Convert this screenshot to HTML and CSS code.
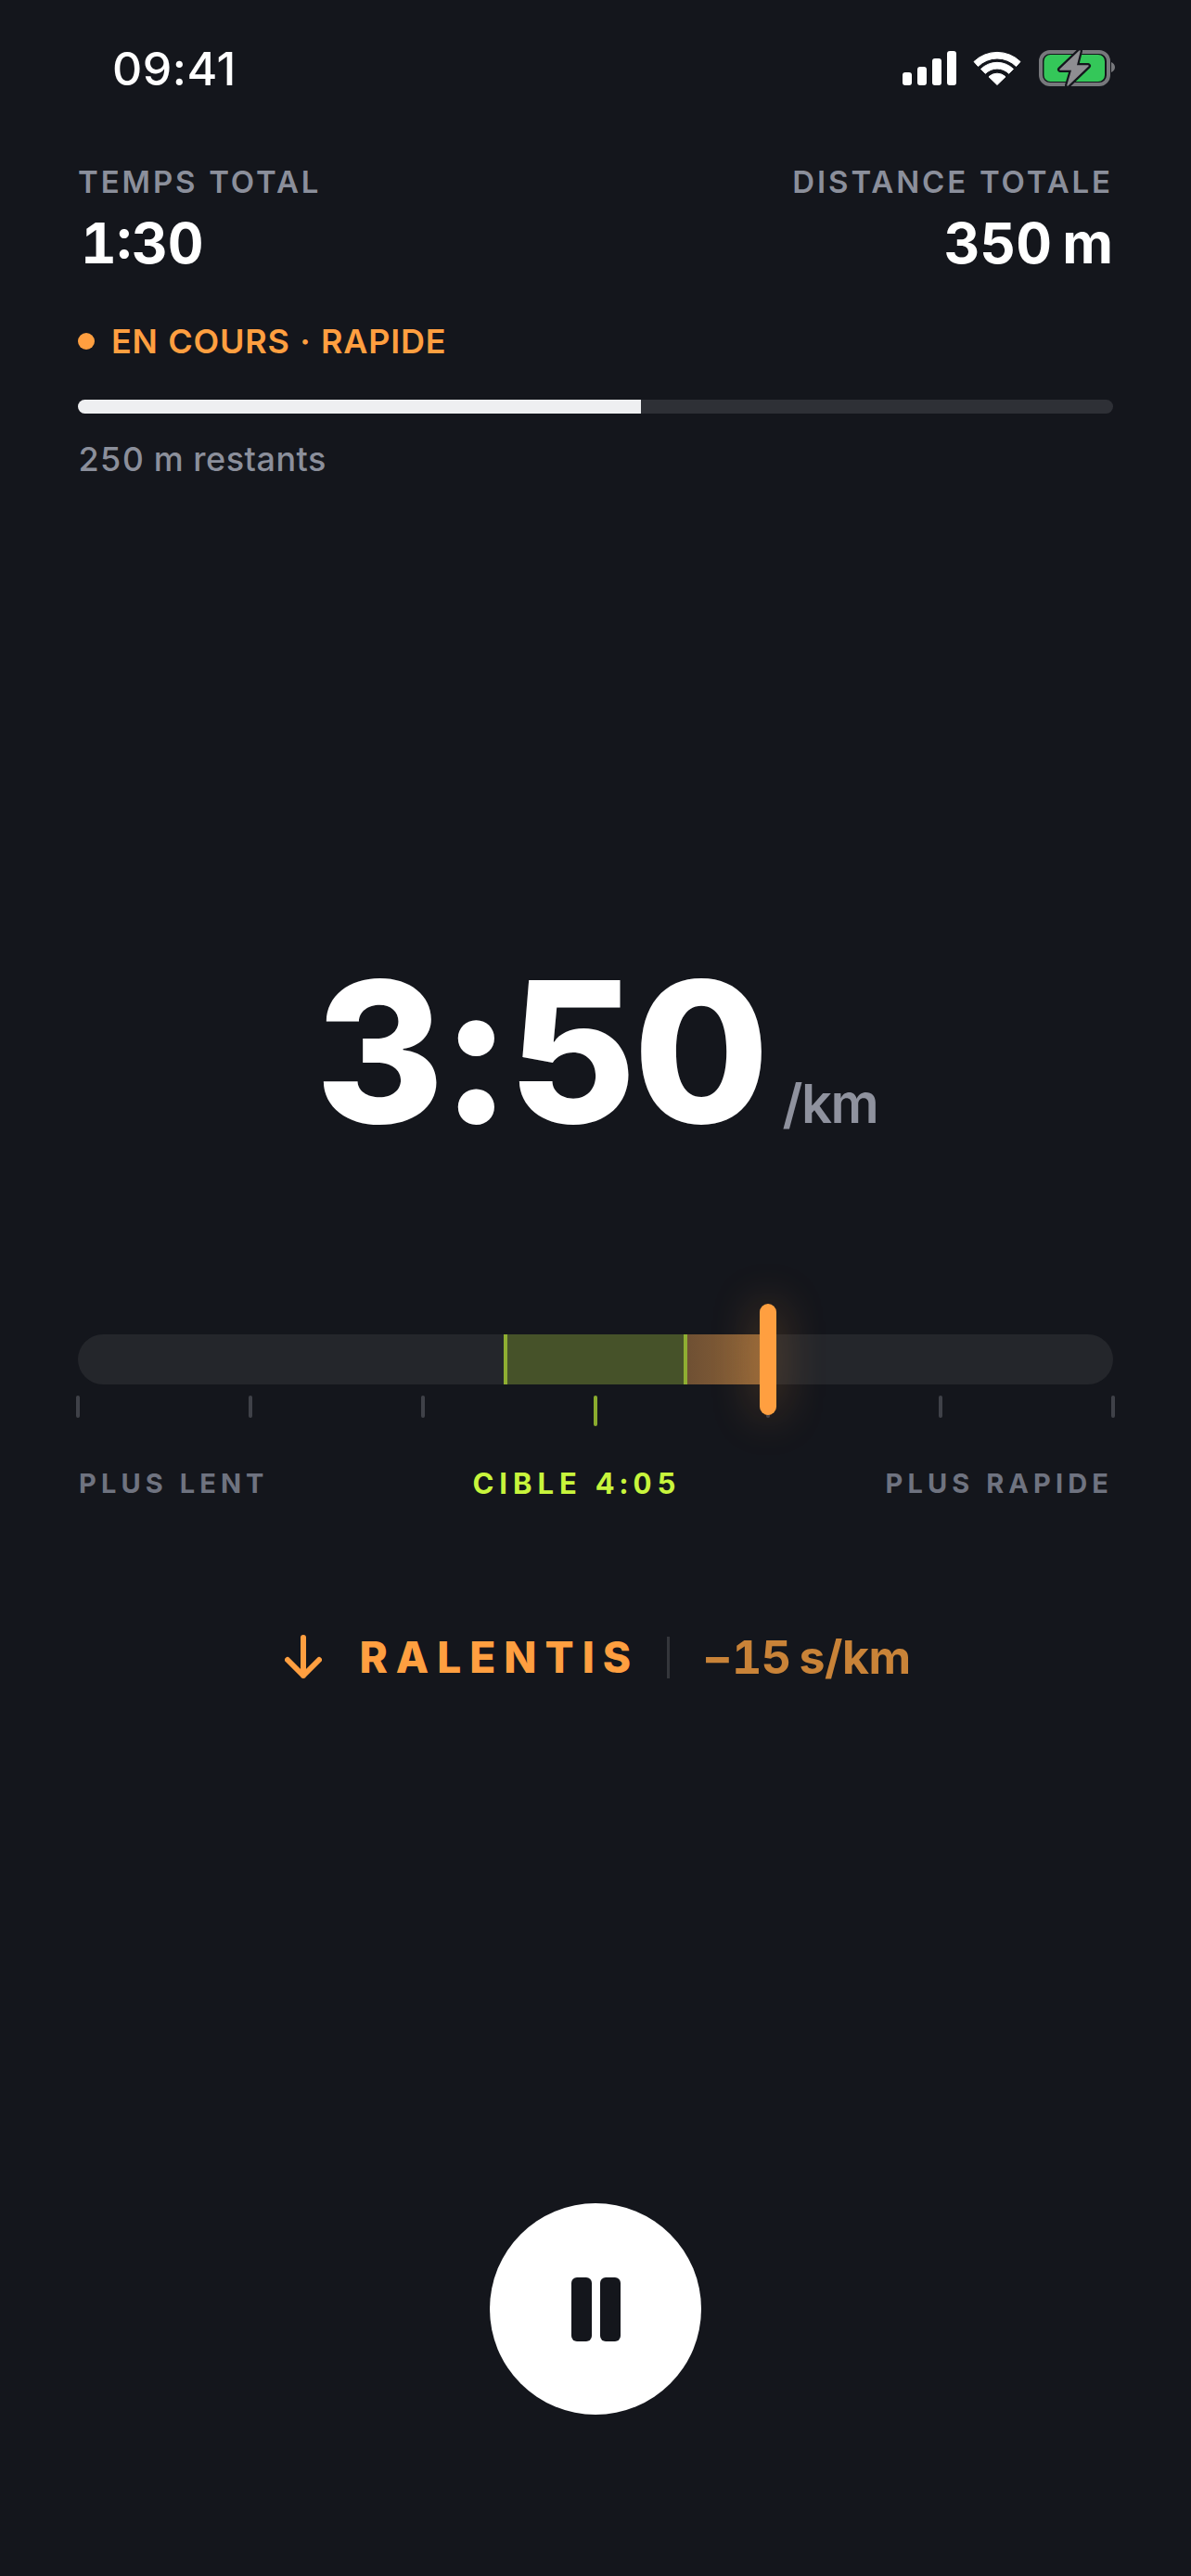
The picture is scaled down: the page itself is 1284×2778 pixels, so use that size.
FILE: index.html
```html
<!DOCTYPE html>
<html lang="fr">
<head>
  <meta charset="UTF-8">
  <meta name="viewport" content="width=device-width, initial-scale=1.0">
  <title>Course en cours</title>
  <link rel="stylesheet" href="styles.css">
</head>
<body>
  <div class="page">
    <div class="status-bar">
      <span class="clock">09:41</span>
      <svg class="status-icons" width="232" height="42" viewBox="970 52 232 42">
        <rect x="973" y="77" width="10" height="14" rx="3" fill="#fff"/>
        <rect x="989" y="71" width="10" height="20" rx="3" fill="#fff"/>
        <rect x="1005" y="62" width="10" height="29" rx="3" fill="#fff"/>
        <rect x="1021" y="54" width="10" height="37" rx="3" fill="#fff"/>
        <path d="M1050 65.500A36 36 0 0 1 1100 65.500L1095.500 70.500A29 29 0 0 0 1054.500 70.500Z" fill="#fff" stroke="#fff" stroke-linejoin="round"/>
        <path d="M1057.500 73.500A25 25 0 0 1 1092.500 73.500L1087.700 78.300A18 18 0 0 0 1062.300 78.300Z" fill="#fff" stroke="#fff" stroke-linejoin="round"/>
        <path d="M1075 90.500L1066 81.800A13 13 0 0 1 1084 81.800Z" fill="#fff" stroke="#fff" stroke-linejoin="round"/>
        <rect x="1122" y="55" width="73" height="35" rx="10" fill="none" stroke="#77787c" stroke-width="4"/>
        <rect x="1125.500" y="58" width="65.500" height="29" rx="7" fill="#34c759"/>
        <path d="M1198 66c2.500 1 4 3 4 5.500s-1.500 4.500-4 5.500z" fill="#77787c"/>
        <path d="M1164 54l-21 20h13l-5 17 22-21h-13z" fill="#14161c" stroke="#14161c" stroke-width="6" stroke-linejoin="round"/>
        <path d="M1164 54l-21 20h13l-5 17 22-21h-13z" fill="#8e8e92" stroke="#8e8e92" stroke-width="1.500" stroke-linejoin="round"/>
      </svg>
    </div>

    <div class="totals">
      <div>
        <div class="total-label">TEMPS TOTAL</div>
        <div class="total-value total-time">1:30</div>
      </div>
      <div class="total-right">
        <div class="total-label">DISTANCE TOTALE</div>
        <div class="total-value">350 m</div>
      </div>
    </div>

    <div class="phase">
      <span class="phase-dot"></span>
      <span>EN COURS · RAPIDE</span>
    </div>

    <div class="progress">
      <div class="progress-fill"></div>
    </div>
    <div class="remaining">250 m restants</div>

    <div class="pace">
      <span class="pace-value">3:50</span>
      <span class="pace-unit">/km</span>
    </div>

    <div class="gauge">
      <div class="gauge-over"></div>
      <div class="gauge-zone"></div>
      <div class="gauge-marker"></div>
    </div>
    <div class="ticks">
      <span class="tick"></span>
      <span class="tick"></span>
      <span class="tick"></span>
      <span class="tick tick-target"></span>
      <span class="tick"></span>
      <span class="tick"></span>
      <span class="tick"></span>
    </div>
    <div class="gauge-labels">
      <span>PLUS LENT</span>
      <span class="gauge-target">CIBLE 4:05</span>
      <span>PLUS RAPIDE</span>
    </div>

    <div class="advice">
      <svg class="advice-arrow" width="40" height="48" viewBox="0 0 40 48">
        <path d="M20 3v41M3 27l17 17 17-17" fill="none" stroke="#ff9f40" stroke-width="6" stroke-linecap="round" stroke-linejoin="round"/>
      </svg>
      <span class="advice-word">RALENTIS</span>
      <span class="advice-sep"></span>
      <span class="advice-delta">−15 s/km</span>
    </div>

    <button class="pause" type="button" aria-label="Pause">
      <span class="pause-bar"></span>
      <span class="pause-bar"></span>
    </button>
  </div>
</body>
</html>
```
FILE: styles.css
```css
body {
  margin: 0;
  background: #14161c;
  color: #fff;
  font-family: Inter, "Liberation Sans", sans-serif;
  font-variant-numeric: tabular-nums;
}
.page {
  display: flex;
  flex-direction: column;
  height: 2778px;
  box-sizing: border-box;
  padding: 0 84px;
  overflow: hidden;
}
.status-bar {
  display: flex;
  justify-content: space-between;
  align-items: center;
  height: 60px;
  margin-top: 44px;
  padding-left: 37px;
}
.clock {
  font-size: 50px;
  font-weight: 500;
  line-height: 60px;
  letter-spacing: 0.500px;
  font-variant-numeric: normal;
}
.status-icons {
  display: block;
  margin-right: -2px;
}
.totals {
  display: flex;
  justify-content: space-between;
  margin-top: 72px;
}
.total-right {
  text-align: right;
}
.total-label {
  font-size: 33px;
  font-weight: 600;
  line-height: 40px;
  letter-spacing: 2.900px;
  color: #8b8f9b;
}
.total-value {
  margin-top: 16px;
  font-size: 60px;
  font-weight: 700;
  line-height: 60px;
  word-spacing: -5px;
}
.total-time {
  padding-left: 3px;
}
.phase {
  display: flex;
  align-items: center;
  gap: 18px;
  margin-top: 56px;
  font-size: 36px;
  font-weight: 600;
  line-height: 40px;
  letter-spacing: 0.800px;
  color: #ff9f40;
}
.phase-dot {
  width: 18px;
  height: 18px;
  border-radius: 50%;
  background: #ff9f40;
}
.progress {
  height: 15px;
  margin-top: 43px;
  border-radius: 8px;
  background: #2e3036;
  overflow: hidden;
}
.progress-fill {
  width: 607px;
  height: 100%;
  background: #eeeff1;
}
.remaining {
  margin-top: 29px;
  font-size: 36px;
  font-weight: 500;
  line-height: 40px;
  letter-spacing: 0.500px;
  color: #8b8f9b;
}
.pace {
  display: flex;
  align-items: baseline;
  justify-content: center;
  gap: 17px;
  margin-top: 519px;
  padding-left: 2px;
  line-height: 200px;
}
.pace-value {
  font-size: 212px;
  font-weight: 800;
  letter-spacing: -3px;
  font-variant-numeric: normal;
}
.pace-unit {
  font-size: 58px;
  font-weight: 600;
  line-height: 58px;
  letter-spacing: -1.500px;
  color: #8f929e;
}
.gauge {
  position: relative;
  height: 54px;
  margin-top: 205px;
  border-radius: 27px;
  background: #24262b;
}
.gauge-zone {
  position: absolute;
  top: 0;
  left: 459px;
  width: 198px;
  height: 100%;
  box-sizing: border-box;
  border-left: 4px solid #8fae32;
  border-right: 4px solid #8fae32;
  background: #465229;
}
.gauge-over {
  position: absolute;
  top: 0;
  left: 657px;
  width: 87px;
  height: 100%;
  background: linear-gradient(to right, #6f5033, #8f6539);
}
.gauge-marker {
  position: absolute;
  top: -33px;
  left: 735px;
  width: 18px;
  height: 120px;
  border-radius: 9px;
  background: #ff9f40;
  box-shadow: 0 0 48px rgba(255, 159, 64, 0.38);
}
.ticks {
  display: flex;
  justify-content: space-between;
  align-items: flex-start;
  margin: 12px -2px 0;
}
.tick {
  width: 4px;
  height: 24px;
  border-radius: 2px;
  background: #3f4148;
}
.tick-target {
  height: 33px;
  background: #8aab2e;
}
.gauge-labels {
  display: flex;
  justify-content: space-between;
  align-items: center;
  margin-top: 42px;
  font-size: 29px;
  font-weight: 700;
  line-height: 40px;
  letter-spacing: 5.100px;
  color: #6f7380;
}
.gauge-labels span:first-child {
  padding-left: 1px;
}
.gauge-target {
  font-size: 31px;
  font-weight: 700;
  letter-spacing: 6px;
  color: #c8f53c;
}
.advice {
  display: flex;
  align-items: center;
  justify-content: center;
  height: 60px;
  margin-top: 137px;
  padding-left: 5px;
}
.advice-arrow {
  display: block;
  margin-right: 40px;
}
.advice-word {
  font-size: 46px;
  font-weight: 800;
  letter-spacing: 9px;
  color: #ff9f40;
}
.advice-sep {
  width: 3px;
  height: 45px;
  margin: 0 35px 0 30px;
  background: #34363b;
}
.advice-delta {
  font-size: 50px;
  font-weight: 700;
  letter-spacing: -0.500px;
  word-spacing: -4px;
  color: #c98338;
}
.pause {
  display: flex;
  align-items: center;
  justify-content: center;
  gap: 9px;
  align-self: center;
  width: 228px;
  height: 228px;
  margin-top: 559px;
  padding: 0;
  border: 0;
  border-radius: 50%;
  background: #fff;
}
.pause-bar {
  width: 22px;
  height: 69px;
  border-radius: 6px;
  background: #14161c;
}
```
